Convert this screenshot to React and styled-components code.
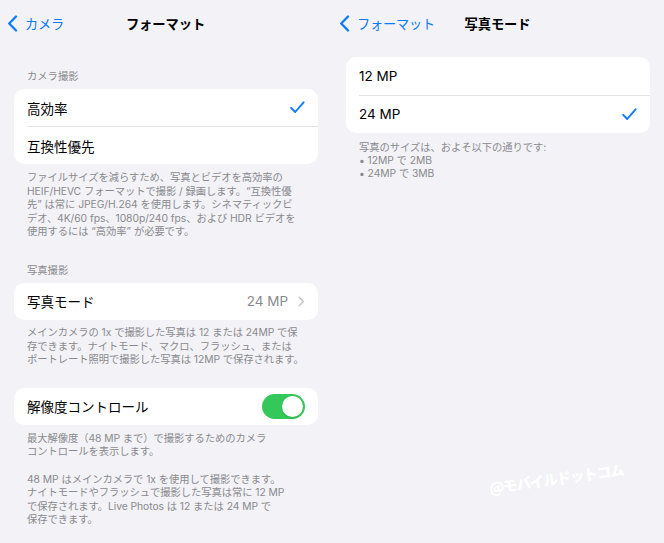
import React from "react";
import styled, { createGlobalStyle } from "styled-components";

const Global = createGlobalStyle`
  html, body { margin: 0; padding: 0; background: #f2f2f7; }
  body { font-family: "Inter", "Noto Sans CJK JP", sans-serif; -webkit-font-smoothing: antialiased; }
  #root { width: 664px; height: 543px; }
`;

const Screen = styled.div`
  position: relative;
  display: flex;
  width: 664px;
  height: 543px;
  overflow: hidden;
  background: #f2f2f7;
`;

const Panel = styled.div`
  width: 332px;
  display: flex;
  flex-direction: column;
`;

const NavBar = styled.div`
  display: grid;
  grid-template-columns: 1fr auto 1fr;
  align-items: center;
  height: 46px;
  padding: 0 8px 0 7px;
`;

const BackButton = styled.div`
  display: flex;
  align-items: center;
  gap: 7px;
  color: #0a7aff;
  font-size: 13.2px;
  letter-spacing: -0.2px;
  white-space: nowrap;
`;

const Title = styled.div`
  font-size: 13.3px;
  font-weight: 700;
  color: #000;
  letter-spacing: -0.1px;
  white-space: nowrap;
`;

const Content = styled.div`
  display: flex;
  flex-direction: column;
  padding: 0 14px;
`;

const Section = styled.div`
  display: flex;
  flex-direction: column;
  margin-top: ${(p) => p.$top}px;
`;

const Header = styled.div`
  padding-left: 13px;
  font-size: 10.3px;
  line-height: 14px;
  color: #8a8a8e;
  margin-bottom: 6px;
`;

const Card = styled.div`
  background: #fff;
  border-radius: 10px;
  overflow: hidden;
`;

const Row = styled.div`
  position: relative;
  display: flex;
  align-items: center;
  height: ${(p) => p.$h || 37}px;
  padding: 0 13px;
  font-size: 13.5px;
  color: #000;
  & + & {
    border-top: 1px solid #e3e3e8;
    margin-left: 13px;
    padding-left: 0;
  }
`;

const Label = styled.span`
  flex: 1;
`;

const Value = styled.span`
  color: #8a8a8e;
  font-size: 13.5px;
  margin-right: 10px;
`;

const Footer = styled.div`
  padding: ${(p) => p.$pt || 7}px 13px 0 13px;
  font-size: 10.3px;
  line-height: ${(p) => p.$lh || 13.6}px;
  color: #8a8a8e;
  white-space: nowrap;
  letter-spacing: -0.05px;
`;

const Gap = styled.div`
  height: ${(p) => p.$h}px;
`;

const Toggle = styled.div`
  width: 43px;
  height: 25px;
  border-radius: 13px;
  background: #34c759;
  display: flex;
  align-items: center;
  justify-content: flex-end;
  padding: 2px;
  box-sizing: border-box;
`;

const Knob = styled.div`
  width: 21px;
  height: 21px;
  border-radius: 50%;
  background: #fff;
  box-shadow: 0 1px 2px rgba(0, 0, 0, 0.12);
`;

const Watermark = styled.div`
  position: absolute;
  left: 489px;
  top: 477px;
  transform: rotate(-8deg);
  transform-origin: left center;
  color: #ffffff;
  font-family: "Noto Sans CJK JP", sans-serif;
  font-weight: 900;
  font-size: 14.5px;
  letter-spacing: -1px;
  white-space: nowrap;
`;

const Chevron = () => (
  <svg width="11" height="17" viewBox="0 0 11 17">
    <path d="M9 1.5 L2.2 8.5 L9 15.5" fill="none" stroke="#0a7aff" strokeWidth="2.3" strokeLinecap="round" strokeLinejoin="round" />
  </svg>
);

const Check = () => (
  <svg width="15" height="13" viewBox="0 0 15 13">
    <path d="M1.2 6.8 L5.2 11 L13.6 1.3" fill="none" stroke="#0a7aff" strokeWidth="1.9" strokeLinecap="round" strokeLinejoin="round" />
  </svg>
);

const Disclosure = () => (
  <svg width="7" height="11" viewBox="0 0 7 11">
    <path d="M1.2 1.2 L5.4 5.5 L1.2 9.8" fill="none" stroke="#c4c4c7" strokeWidth="1.5" strokeLinecap="round" strokeLinejoin="round" />
  </svg>
);

export default function App() {
  return (
    <Screen>
      <Global />
      <Panel>
        <NavBar>
          <BackButton>
            <Chevron />
            カメラ
          </BackButton>
          <Title>フォーマット</Title>
          <span />
        </NavBar>
        <Content>
          <Section $top={23}>
            <Header>カメラ撮影</Header>
            <Card>
              <Row>
                <Label>高効率</Label>
                <Check />
              </Row>
              <Row>
                <Label>互換性優先</Label>
              </Row>
            </Card>
            <Footer>
              ファイルサイズを減らすため、写真とビデオを高効率の<br />
              HEIF/HEVC フォーマットで撮影 / 録画します。“互換性優<br />
              先” は常に JPEG/H.264 を使用します。シネマティックビ<br />
              デオ、4K/60 fps、1080p/240 fps、および HDR ビデオを<br />
              使用するには “高効率” が必要です。
            </Footer>
          </Section>
          <Section $top={24}>
            <Header>写真撮影</Header>
            <Card>
              <Row>
                <Label>写真モード</Label>
                <Value>24 MP</Value>
                <Disclosure />
              </Row>
            </Card>
            <Footer $pt={6}>
              メインカメラの 1x で撮影した写真は 12 または 24MP で保<br />
              存できます。ナイトモード、マクロ、フラッシュ、または<br />
              ポートレート照明で撮影した写真は 12MP で保存されます。
            </Footer>
          </Section>
          <Section $top={21}>
            <Card>
              <Row>
                <Label>解像度コントロール</Label>
                <Toggle>
                  <Knob />
                </Toggle>
              </Row>
            </Card>
            <Footer>
              最大解像度（48 MP まで）で撮影するためのカメラ<br />
              コントロールを表示します。
              <Gap $h={13.6} />
              48 MP はメインカメラで 1x を使用して撮影できます。<br />
              ナイトモードやフラッシュで撮影した写真は常に 12 MP<br />
              で保存されます。Live Photos は 12 または 24 MP で<br />
              保存できます。
            </Footer>
          </Section>
        </Content>
      </Panel>
      <Panel>
        <NavBar>
          <BackButton>
            <Chevron />
            フォーマット
          </BackButton>
          <Title>写真モード</Title>
          <span />
        </NavBar>
        <Content>
          <Section $top={11}>
            <Card>
              <Row $h={37.5}>
                <Label>12 MP</Label>
              </Row>
              <Row $h={37.5}>
                <Label>24 MP</Label>
                <Check />
              </Row>
            </Card>
            <Footer $pt={8} $lh={13}>
              写真のサイズは、およそ以下の通りです:<br />
              • 12MP で 2MB<br />
              • 24MP で 3MB
            </Footer>
          </Section>
        </Content>
      </Panel>
      <Watermark>@モバイルドットコム</Watermark>
    </Screen>
  );
}
